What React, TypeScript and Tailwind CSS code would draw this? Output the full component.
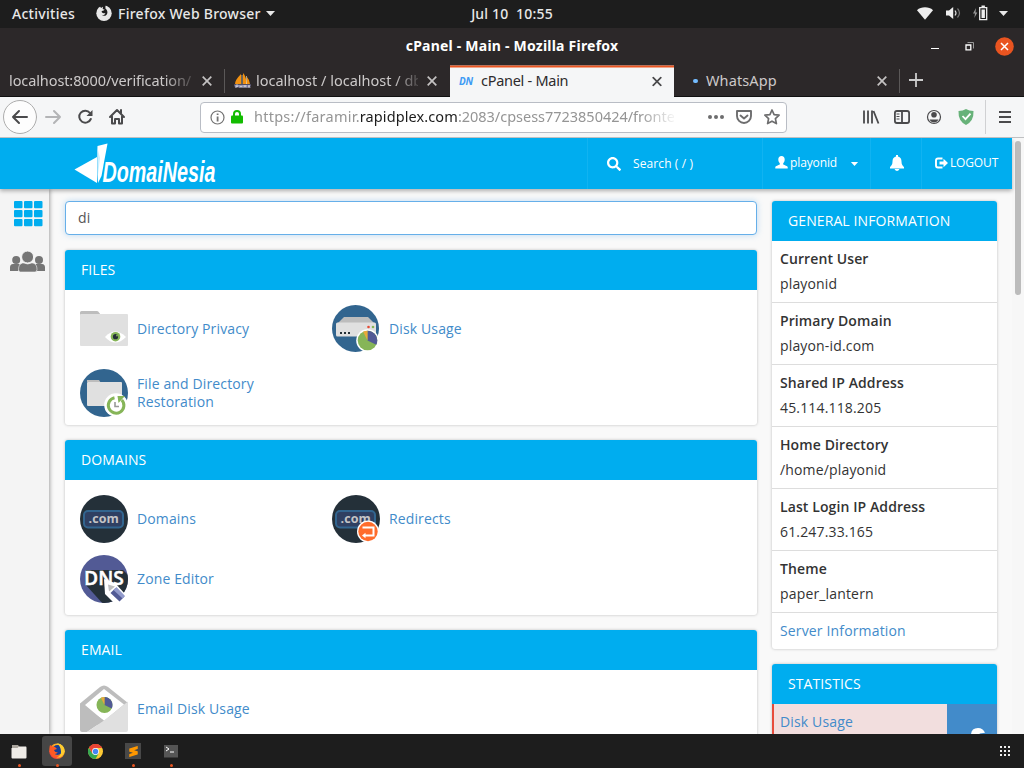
import React from 'react';
import { FaSearch } from 'react-icons/fa';
import { SiSublimetext } from 'react-icons/si';

const ubuntu = "font-['Noto_Sans',sans-serif]";

function Caret({ className = '' }: { className?: string }) {
  return (
    <svg className={className} width="9" height="5" viewBox="0 0 9 5" fill="currentColor">
      <path d="M0 0h9L4.500 5z" />
    </svg>
  );
}

function SystemBar() {
  return (
    <div className="flex h-7 shrink-0 items-center bg-[#1d1d1d] text-[14px] font-medium text-[#e8e8e8]">
      <div className="flex w-[406px] items-center pl-3 pb-0.5">
        <span className="w-[84px] whitespace-nowrap tracking-[0.28px]">Activities</span>
        <svg width="16" height="16" viewBox="0 0 16 16">
          <circle cx="8" cy="8.200" r="7.700" fill="#e8e8e8" />
          <path d="M3.200 0L5 3l2-1.200L6.700 4l2 .7-1.600 1.100C5.800 5.600 5.200 6.500 6 7.600c.9 1 2.500.8 3.300.3-.2 1.700-1.700 2.600-3.600 1.900 2 2 5.500 1 5.700-2.100.1-2-.8-3.200-2-4.100L9.500 0H4z" fill="#1d1d1d" />
        </svg>
        <span className="ml-1.5 w-[143px] whitespace-nowrap tracking-[0.26px]">Firefox Web Browser</span>
        <Caret className="ml-[5px]" />
      </div>
      <div className="w-[212px] pb-0.5 text-center tracking-[0.18px]"><span className="whitespace-pre">Jul 10  10:55</span></div>
      <div className="ml-auto flex items-center pb-0.5 pr-[14px]">
        <svg width="16" height="13" viewBox="0 0 16 13"><path d="M0 3.200C4-.6 12-.6 16 3.200L8 12.800z" fill="#eee" /></svg>
        <svg className="ml-[13px]" width="15" height="14" viewBox="0 0 15 14" fill="none" stroke="#aaa" strokeWidth="1.200">
          <path d="M0 4.500h3L7.200 1v12L3 9.500H0z" fill="#eee" stroke="none" />
          <path d="M9 4.500q2 2.500 0 5" stroke="#ddd" /><path d="M11.500 2.500q4 4.500 0 9" stroke="#777" />
        </svg>
        <svg className="ml-[12px]" width="15" height="16" viewBox="0 0 15 16">
          <path d="M3 3L0 8.500h2L1.300 13 4.300 7.500H2.500z" fill="#999" />
          <path d="M6.700 2.700h7v12h-7z" fill="none" stroke="#eee" strokeWidth="1.300" /><path d="M8.500 4.500h3.400v8.400H8.500zM8.500.5h3.400V3H8.500z" fill="#eee" />
        </svg>
        <Caret className="ml-[11px] mr-[2px]" />
      </div>
    </div>
  );
}

function TitleBar() {
  return (
    <div className="grid h-[37px] shrink-0 grid-cols-[1fr_214px_1fr] items-center bg-[#2c2829]">
      <span />
      <span className="-mt-0.5 whitespace-nowrap text-center text-[14px] font-bold tracking-[0.22px] text-white">cPanel - Main - Mozilla Firefox</span>
      <div className="flex items-center justify-end pr-[10px]">
        <span className="mt-1 h-px w-2 bg-white" />
        <svg className="ml-[26px]" width="9" height="9" viewBox="0 0 9 9" fill="none"><path d="M1 3h4.800v4.800H1z" stroke="#fff" strokeWidth="1.300" /><path d="M2.500.500h6v6" stroke="#999" /></svg>
        <svg className="ml-[21px]" width="19" height="19" viewBox="0 0 19 19"><circle cx="9.500" cy="9.500" r="9.300" fill="#e95420" /><path d="M6 6l7 7m0-7l-7 7" stroke="#fff" strokeWidth="1.500" /></svg>
      </div>
    </div>
  );
}

function CloseMark({ active = false }: { active?: boolean }) {
  return (
    <svg className="shrink-0" width="10" height="10" viewBox="0 0 10 10">
      <path d="M.7.7l8.600 8.600m0-8.600L.7 9.300" stroke={active ? '#4a4a4c' : '#c4c2c2'} strokeWidth="1.700" />
    </svg>
  );
}

function TabStrip() {
  return (
    <div className="flex h-8 shrink-0 items-center border-b border-[#111] bg-[#2c2829] text-[14.500px] text-[#ccc9c9]">
      <div className="flex w-[224px] items-center pl-[9px]">
        <span className="mr-2 w-[185px] overflow-hidden whitespace-nowrap tracking-[-0.1px] [mask-image:linear-gradient(to_right,black_155px,transparent_190px)]">localhost:8000/verification/</span>
        <CloseMark />
      </div>
      <div className="h-6 w-px bg-[#5b5858]" />
      <div className="flex w-[225px] items-center pl-[9px]">
        <svg className="shrink-0" width="17" height="16" viewBox="0 0 17 16">
          <path d="M7 1Q1 7 1 11h6zM9 0v11h4Q12 3 9 0zM13 4v7h3Q15 6 13 4z" fill="#f29111" />
          <path d="M8 2v9M12.500 3v8" stroke="#fff2cc" strokeWidth=".6" />
          <path d="M0 11.500h17l-1 3H1z" fill="#7775a0" /><path d="M2 15v-3h2v1.500H2m4 1.500v-3m0 1.500h2m0-1.500v3m2 0v-3l1 2 1-2v3m2 0l1-3 1 3" stroke="#ddd" strokeWidth=".7" fill="none" />
        </svg>
        <span className="ml-[5px] mr-[9px] w-[162px] overflow-hidden whitespace-nowrap [mask-image:linear-gradient(to_right,black_138px,transparent_168px)]">localhost / localhost / db</span>
        <CloseMark />
      </div>
      <div className="flex h-[32px] w-[224px] translate-y-[0.5px] items-center border-t-2 border-[#e95420] bg-[#f5f6f7] pl-[9px] text-[#2d2b2c]">
        <span className="-mt-0.5 w-[15px] shrink-0 text-[10px] font-bold italic tracking-[-0.2px] text-[#3e9bf4]">DN</span>
        <span className="-mt-1 ml-[7px] w-[161px] whitespace-nowrap tracking-[-0.28px]">cPanel - Main</span>
        <span className="-mt-0.5 ml-[10px]"><CloseMark active /></span>
      </div>
      <div className="flex w-[225px] items-center pl-[19px]">
        <span className="h-1 w-[5px] rounded-full bg-[#74bcff]" />
        <span className="ml-2 w-[162px] tracking-[0.1px]">WhatsApp</span>
        <span className="ml-[9px]"><CloseMark /></span>
      </div>
      <div className="h-6 w-px bg-[#5b5858]" />
      <svg className="-mt-0.5 ml-[9px]" width="14" height="14" viewBox="0 0 14 14"><path d="M7 0v14M0 7h14" stroke="#ccc" strokeWidth="1.800" /></svg>
    </div>
  );
}

function Toolbar() {
  return (
    <div className="flex h-[41px] shrink-0 items-center border-b border-[#bfc0c2] bg-[#f5f6f7]">
      <svg width="200" height="40" viewBox="0 0 200 40" fill="none" stroke="#4a4a4c" strokeWidth="2" strokeLinejoin="round" strokeLinecap="round">
        <circle cx="20" cy="20" r="16.500" fill="#fdfdfd" stroke="#adadad" strokeWidth="1" />
        <path d="M27 20H13m6-6l-6 6 6 6" />
        <path d="M46 20h14m-6-6l6 6-6 6" stroke="#b3b4b6" />
        <path d="M90 16a6 6 0 1 0 .8 6" /><path d="M92.500 13v6h-6z" fill="#4a4a4c" stroke="none" />
        <path d="M110 20l7-7 7 7M112 19.500v7h3v-4.500h4v4.500h3v-7" /><path d="M121 13v3" />
      </svg>
      <div className="flex h-[31px] w-[587px] items-center rounded-[4px] border border-[#b9bdc5] bg-white pl-[9px] pr-[6px]">
        <svg className="shrink-0" width="15" height="15" viewBox="0 0 15 15"><circle cx="7.500" cy="7.500" r="6.500" fill="none" stroke="#737373" strokeWidth="1.200" /><path d="M6.700 6.500h1.800v5H6.700zM6.700 3.400h1.800v1.700H6.700z" fill="#737373" /></svg>
        <svg className="ml-1.5 shrink-0" width="12" height="14" viewBox="0 0 12 14"><path d="M3 6V4a3 3 0 0 1 6 0v2" fill="none" stroke="#12bc00" strokeWidth="2" /><rect y="5.500" width="12" height="8" rx="1" fill="#12bc00" /></svg>
        <span className="ml-[11px] w-[420px] overflow-hidden whitespace-nowrap text-[14.500px] text-[#959595] [mask-image:linear-gradient(to_right,black_385px,transparent_424px)]"><span className="tracking-[0.25px]">https://faramir.</span><span className="tracking-[0.1px] text-[#1c1c1c]">rapidplex.com</span><span className="tracking-[-0.02px]">:2083/cpsess7723850424/fronte</span></span>
        <svg className="ml-auto shrink-0" width="75" height="18" viewBox="0 0 75 18" fill="none" stroke="#6d6d6e" strokeWidth="1.900" strokeLinejoin="round" strokeLinecap="round">
          <g fill="#6d6d6e" stroke="none"><circle cx="5" cy="9" r="2" /><circle cx="11" cy="9" r="2" /><circle cx="17" cy="9" r="2" /></g>
          <path d="M32 3h14v5a7 7 0 0 1-14 0zM35.500 7.500L39 10.500l3.500-3" />
          <path d="M67 2l2.100 4.600 5 .6-3.700 3.400 1 5L67 13.200l-4.400 2.400 1-5-3.700-3.400 5-.6z" strokeWidth="1.700" />
        </svg>
      </div>
      <svg className="ml-auto" width="164" height="40" viewBox="0 0 164 40" fill="none" stroke="#4a4a4c" strokeWidth="1.800">
        <path d="M4 13.500v13M8 13.500v13M12 13.500v13M13.500 14l5 12.500" />
        <rect x="34.900" y="14" width="14.200" height="12" rx="2" /><path d="M42 14v12" /><path d="M36.500 17h3m-3 2.500h3m-3 2.500h3" strokeWidth="1" />
        <circle cx="74" cy="20" r="6.500" strokeWidth="1.200" /><circle cx="74" cy="17.800" r="2.800" fill="#4a4a4c" stroke="none" /><path d="M69.500 22.500h9q-1.500 3-4.500 3t-4.500-3z" fill="#4a4a4c" stroke="none" />
        <path d="M98.500 14q4.500-.2 7.500-2 3 1.800 7.500 2 .5 10-7.500 14-8-4-7.500-14z" fill="#67b279" stroke="none" /><path d="M102.500 19l3 3.200 5-5.500" stroke="#fff" />
        <path d="M125.500 3v34" stroke="#d0d1d3" strokeWidth="1" />
        <path d="M139 15h12m-12 5h12m-12 5h12" strokeWidth="2" />
      </svg>
    </div>
  );
}

function SiteHeader() {
  return (
    <header className="relative z-10 flex h-[51px] shrink-0 bg-[#00adef] text-white shadow-[0_2px_4px_rgba(0,0,0,0.3)]">
      <div className="w-[587px] pl-[73px]">
        <svg width="150" height="51" viewBox="0 0 150 51">
          <path d="M1.500 31.500L24 19v26z" fill="#fff" /><path d="M24.500 8L34.500 5.500 28.500 38 25 45z" fill="#fff" /><path d="M24 8v37l3-25z" fill="#b8e9ff" opacity=".7" />
          <text x="29.500" y="44" fontFamily="Liberation Sans" fontSize="29" fontWeight="700" fontStyle="italic" fill="#fff" textLength="113" lengthAdjust="spacingAndGlyphs">DomaiNesia</text>
        </svg>
      </div>
      <div className="flex w-[175px] items-center border-l border-[#11b3f1] pl-[19px] text-[12px]">
        <FaSearch size={14} /><span className="ml-3 tracking-[0.1px]">Search ( / )</span>
      </div>
      <div className="flex w-[108px] items-center border-l border-[#11b3f1] pb-0.5 pl-[12px] text-[12px]">
        <svg width="13" height="13" viewBox="0 0 13 13" fill="currentColor"><path d="M6.500 0c2 0 3.200 1.500 3.200 3.500 0 1.700-.7 2.800-1.500 3.800v1.200c1.500.8 4.300 1.500 4.500 2.500V12.500H.3V11c.2-1 3-1.700 4.500-2.500V7.300c-.8-1-1.500-2.100-1.500-3.800C3.300 1.500 4.500 0 6.500 0z" /></svg>
        <span className="ml-[2px] w-[60px] tracking-[-0.12px]">playonid</span><Caret className="mt-[3px] h-1" />
      </div>
      <div className="flex w-[51px] items-center justify-center border-l border-[#11b3f1] pb-0.5 pl-0.5">
        <svg width="14" height="16" viewBox="0 0 14 16" fill="currentColor"><path d="M6 0h2v1.500c2.500.7 3.500 2.500 3.500 5 0 3 1 4 2.500 5.500V13.500H0V12c1.500-1.500 2.500-2.500 2.500-5.500 0-2.500 1-4.300 3.500-5zM4.500 14h5q-1 2-2.500 2t-2.500-2z" /></svg>
      </div>
      <div className="flex grow items-center border-l border-[#11b3f1] pb-0.5 pl-[13px] text-[12px]">
        <svg width="13" height="12" viewBox="0 0 13 12"><path d="M7.500 1.500H3Q1 1.500 1 3.500v5q0 2 2 2h4.500" fill="none" stroke="#fff" strokeWidth="1.900" /><path d="M4.500 4.500H8.500V1.800L13 6 8.500 10.200V7.500h-4z" fill="#fff" /></svg>
        <span className="ml-[2px] tracking-[-0.15px]">LOGOUT</span>
      </div>
    </header>
  );
}

function PieBadge({ x, y, r }: { x: number; y: number; r: number }) {
  return (
    <g transform={`translate(${x} ${y}) scale(${r / 10})`}>
      <circle r="10" fill="#86b558" /><path d="M0 0V-10A10 10 0 0 1 9 4.300z" fill="#525a95" /><path d="M0 0V-10A10 10 0 0 0-4.500-9z" fill="#e9a83a" />
    </g>
  );
}

function FolderPrivacyIcon() {
  return (
    <svg className="size-12 shrink-0" viewBox="0 0 48 48">
      <path d="M0 10V7.500Q0 6 1.500 6H17q1.500 0 2 1.500L21 10z" fill="#bdbdbd" /><rect y="9" width="48" height="32" rx="1" fill="#e0e0e0" />
      <path d="M25 32q10-11 21 0-11 11-21 0z" fill="#fff" /><circle cx="35.500" cy="31.700" r="4.800" fill="#86b558" /><circle cx="35.500" cy="31.700" r="2.600" fill="#232e36" /><circle cx="37" cy="30.500" r=".9" fill="#86b558" />
    </svg>
  );
}

function DiskUsageIcon() {
  return (
    <svg className="size-12 shrink-0" viewBox="0 0 48 48">
      <circle cx="23.500" cy="23.500" r="23.500" fill="#32658f" /><path d="M4 20L12 12h24l8 8z" fill="#bdbdbd" /><rect x="4" y="17.500" width="40" height="14" rx="1.500" fill="#e0e0e0" />
      <path d="M8 27h2v2H8zm4 0h2v2h-2zm4 0h2v2h-2z" fill="#232e36" /><circle cx="36.500" cy="22" r="1.300" fill="#e54b36" /><circle cx="41" cy="22" r="1.300" fill="#86b558" />
      <circle cx="35.500" cy="35.500" r="11.300" fill="#fff" /><PieBadge x={35.500} y={35.500} r={9.800} />
    </svg>
  );
}

function RestorationIcon() {
  return (
    <svg className="size-12 shrink-0" viewBox="0 0 48 48">
      <circle cx="24" cy="24" r="24" fill="#32658f" /><path d="M7 13v-2h12l2 3z" fill="#bdbdbd" /><rect x="7" y="13" width="35" height="24" rx="1" fill="#e0e0e0" />
      <circle cx="36" cy="36" r="11.800" fill="#fff" /><path d="M34.500 28.700A7.800 7.800 0 1 0 41.800 31" fill="none" stroke="#86b558" strokeWidth="3" /><path d="M37.500 27h7.500L38.500 34z" fill="#86b558" /><path d="M35 33v4.500h4" fill="none" stroke="#999" strokeWidth="1.600" />
    </svg>
  );
}

function DomainIcon({ redirect = false }: { redirect?: boolean }) {
  return (
    <svg className="size-12 shrink-0" viewBox="0 0 48 48">
      <circle cx="24" cy="24" r="24" fill="#243039" /><rect x="4" y="16" width="39" height="16.500" rx="4" fill="#2f4062" stroke="#32658f" strokeWidth="2" />
      <text x="8.500" y="28" fontFamily="Open Sans" fontSize="12.500" fontWeight="700" fill="#c4c4c6" textLength="30.500" lengthAdjust="spacingAndGlyphs">.com</text>
      {redirect && <g><circle cx="36" cy="36.500" r="11" fill="#fff" /><circle cx="36" cy="36.500" r="9.700" fill="#ff6c2c" /><path d="M30.500 32.500h11v8H32" fill="none" stroke="#fff" strokeWidth="2" /><path d="M30 40.500l3.500-2.800v5.600z" fill="#fff" /></g>}
    </svg>
  );
}

function ZoneEditorIcon() {
  return (
    <svg className="size-12 shrink-0" viewBox="0 0 48 48">
      <clipPath id="zoneDisc"><circle cx="24" cy="24" r="24" /></clipPath>
      <g clipPath="url(#zoneDisc)"><path d="M0 0h48v48H0z" fill="#525a95" /><path d="M6 15h37l5 5v30H24L5 29z" fill="#243039" /></g>
      <text x="4" y="29.500" fontFamily="Open Sans" fontSize="19.500" fontWeight="600" fill="#fff" stroke="#fff" strokeWidth=".5" textLength="40" lengthAdjust="spacingAndGlyphs">DNS</text>
      <path d="M24 24l11 4 11 12-8 8h-4l-9-9z" fill="#fff" /><path d="M28 29.500l7 2-6 5z" fill="#bdbdbd" /><path d="M30.500 38l5-5 9 8.500-5 5z" fill="#525a95" /><path d="M33.500 35l3-3 8.500 9-2.500 2.500z" fill="#929acb" />
    </svg>
  );
}

function EmailIcon() {
  return (
    <svg className="size-12 shrink-0" viewBox="0 0 48 48">
      <path d="M0 18.500L20 2q4-3 8 0l20 16v6L24 38 0 45z" fill="#bdbdbd" /><path d="M5 20L24 4l20 15.500L24 36z" fill="#fff" /><path d="M0 18.500l24 17L7 47H2q-2 0-2-2z" fill="#bdbdbd" /><path d="M24 35.500l24-19V45q0 2-2 2H7z" fill="#e0e0e0" /><PieBadge x={24.500} y={20} r={8} />
    </svg>
  );
}

function Item({ icon, label, className = '' }: { icon: React.ReactNode; label: string; className?: string }) {
  return (
    <a className={`flex items-center text-[14px] leading-[18px] tracking-[0.13px] text-[#428bca] ${className}`}>
      {icon}<span className="ml-[9px] max-w-[150px]">{label}</span>
    </a>
  );
}

function Panel({ title, className, children }: { title: string; className: string; children: React.ReactNode }) {
  return (
    <section className={`overflow-hidden rounded-[3px] bg-white shadow-[0_0_3px_rgba(0,0,0,0.25)] ${className}`}>
      <h2 className="flex h-10 items-center bg-[#00adef] px-4 pb-0.5 text-[14px] tracking-[0.1px] text-white">{title}</h2>
      {children}
    </section>
  );
}

const info: [string, string][] = [
  ['Current User', 'playonid'],
  ['Primary Domain', 'playon-id.com'],
  ['Shared IP Address', '45.114.118.205'],
  ['Home Directory', '/home/playonid'],
  ['Last Login IP Address', '61.247.33.165'],
  ['Theme', 'paper_lantern'],
];

function SideNav() {
  return (
    <nav className="w-[49px] shrink-0 bg-[#f4f4f4] shadow-[1px_0_4px_rgba(0,0,0,0.35)]">
      <svg className="ml-[14px] mt-3" width="29" height="26" viewBox="0 0 29 26" fill="#00adef">
        {[0, 9, 18].map((y) => [0, 10, 20].map((x) => <rect key={`${x}-${y}`} x={x} y={y} width="8.500" height="7.300" rx="1" />))}
      </svg>
      <svg className="ml-[10px] mt-[24px]" width="36" height="22" viewBox="0 0 36 22" fill="#757575">
        <circle cx="6.200" cy="9" r="4" /><circle cx="29" cy="9" r="4" /><path d="M0 20v-3.500Q0 13 3 13h6l2 1.500L8 20zM35 20v-3.500Q35 13 32 13h-6l-2 1.500 3 5.500z" />
        <circle cx="17.600" cy="6" r="6" stroke="#f4f4f4" strokeWidth="1" /><path d="M8.500 18.500q0-5.500 4-6.500h1.500q3.500 2 7.500 0H23q4 1 4 6.500 0 2.500-2 2.500H10.500q-2 0-2-2.500z" stroke="#f4f4f4" strokeWidth=".6" />
      </svg>
    </nav>
  );
}

function Page() {
  return (
    <div className="flex min-h-0 grow overflow-hidden bg-[#f9f9f9] font-['Open_Sans',sans-serif] text-[#333]">
      <div className="flex w-[1012px] flex-col">
        <SiteHeader />
        <div className="flex min-h-0 grow">
          <SideNav />
          <main className="flex w-[708px] shrink-0 flex-col gap-[15px] pl-4 pt-3">
            <div className="flex h-[34px] shrink-0 items-center rounded-[4px] border border-[#66afe9] bg-white px-3 pb-0.5 text-[14px] tracking-[0.3px] text-[#555] shadow-[0_0_6px_rgba(102,175,233,0.4)]">di</div>
            <Panel title="FILES" className="h-[175px] shrink-0">
              <div className="grid grid-cols-[252px_252px] grid-rows-[48px_48px] gap-y-4 px-[15px] pt-[15px]">
                <Item icon={<FolderPrivacyIcon />} label="Directory Privacy" />
                <Item icon={<DiskUsageIcon />} label="Disk Usage" />
                <Item icon={<RestorationIcon />} label="File and Directory Restoration" />
              </div>
            </Panel>
            <Panel title="DOMAINS" className="h-[175px] shrink-0">
              <div className="grid grid-cols-[252px_252px] grid-rows-[48px_48px] gap-y-3 px-[15px] pt-[15px]">
                <Item icon={<DomainIcon />} label="Domains" />
                <Item icon={<DomainIcon redirect />} label="Redirects" />
                <Item icon={<ZoneEditorIcon />} label="Zone Editor" />
              </div>
            </Panel>
            <Panel title="EMAIL" className="h-[175px] shrink-0">
              <div className="px-[15px] pt-[15px]"><Item icon={<EmailIcon />} label="Email Disk Usage" /></div>
            </Panel>
          </main>
          <aside className="ml-[15px] flex w-[225px] flex-col gap-[15px] pt-3">
            <Panel title="GENERAL INFORMATION" className="h-[448px] shrink-0">
              {info.map(([label, value]) => (
                <div key={label} className="h-[62px] border-b border-[#ddd] px-2 pt-[5px] text-[14px] leading-[25px] tracking-[0.1px]">
                  <div className="font-semibold">{label}</div><div className="tracking-[0.16px]">{value}</div>
                </div>
              ))}
              <a className="flex h-9 items-center px-2 pb-0.5 text-[14px] tracking-[0.15px] text-[#428bca]">Server Information</a>
            </Panel>
            <Panel title="STATISTICS" className="h-[175px] shrink-0">
              <div className="flex h-[62px]">
                <div className="w-[175px] border-l-2 border-[#e74c3c] bg-[#f2dede] pl-1.5 pt-[5px] text-[14px] leading-[25px] tracking-[0.15px] text-[#428bca]">Disk Usage</div>
                <div className="flex grow bg-[#428bca] pl-6 pt-6">
                  <svg width="14" height="14" viewBox="0 0 14 14"><path d="M0 7Q0 0 7 0q5 0 7 4.800L8.500 5.500 12 11 6 14z" fill="#fff" /></svg>
                </div>
              </div>
            </Panel>
          </aside>
        </div>
      </div>
      <div className="flex w-3 justify-center bg-[#f7f7f7] pt-[3px]"><div className="h-[154px] w-[6px] rounded-full bg-[#bcbcbc]" /></div>
    </div>
  );
}

function RunningDot() {
  return <span className="absolute bottom-[1.5px] size-[3px] rounded-full bg-[#e95420]" />;
}

function Dock() {
  const slot = 'relative flex h-[34px] w-[38px] shrink-0 items-center justify-center';
  return (
    <div className="flex h-[34px] shrink-0 items-center bg-[#1d1d1d]">
      <div className={slot}>
        <svg width="16" height="15" viewBox="0 0 16 15"><path d="M1 1h6l1.500 2H15v10H1z" fill="#aaa59d" /><path d="M.5 4h6L8 2.500h7Q15.500 2.500 15.500 4v9.500q0 1-1 1h-13q-1 0-1-1z" fill="#efece7" /></svg><RunningDot />
      </div>
      <div className={slot}>
        <div className="flex h-[30px] w-[30px] shrink-0 items-center justify-center rounded-[3px] bg-[#464646]">
          <svg width="16" height="16" viewBox="0 0 16 16">
            <defs><linearGradient id="flame" x1="1" y1="0" x2="0" y2="1"><stop stopColor="#fff04a" /><stop offset=".45" stopColor="#ff9a1f" /><stop offset="1" stopColor="#e8174f" /></linearGradient></defs>
            <circle cx="8" cy="8.200" r="7.800" fill="url(#flame)" /><circle cx="8.500" cy="7" r="5" fill="#173f96" /><path d="M8 0q8 2 7.500 9-2 6-8 5.500 5-2 4.500-6Q12 4 8 0z" fill="#ffcc2f" /><path d="M1 2q2 2 5 2l2 2-3 1q1 3 4 2-2 3-5 1.500Q7 14 11 12q-3 3-7 2Q-1 9 1 2z" fill="#ff5a24" />
          </svg>
        </div><RunningDot />
      </div>
      <div className={slot}>
        <svg width="15" height="15" viewBox="0 0 48 48"><circle cx="24" cy="24" r="24" fill="#fcc934" /><path d="M24 24L3.200 12A24 24 0 0 1 44.800 12z" fill="#e94435" /><path d="M3.200 12A24 24 0 0 0 24 48L34 30H14z" fill="#36a852" /><path d="M24 13h21.500L34 30H24z" fill="#fcc934" /><path d="M3.200 12A24 24 0 0 1 44.800 13H24L14 30z" fill="#e94435" /><circle cx="24" cy="24" r="11" fill="#fff" /><circle cx="24" cy="24" r="8.700" fill="#4385f4" /></svg>
      </div>
      <div className={slot}><div className="flex size-4 items-center justify-center bg-[#484848] text-[#ff9800]"><SiSublimetext size={11} /></div><RunningDot /></div>
      <div className={slot}>
        <svg width="14" height="13" viewBox="0 0 14 13"><path d="M0 0h14v12.500H0z" fill="#555" /><path d="M2 2l3 2-3 2M6 7h4" stroke="#fff" fill="none" /></svg><RunningDot />
      </div>
      <svg className="ml-auto mr-[14px]" width="10" height="10" viewBox="0 0 10 10" fill="#eee"><path d="M0 0h2v2H0zM4 0h2v2H4zM8 0h2v2H8zM0 4h2v2H0zM4 4h2v2H4zM8 4h2v2H8zM0 8h2v2H0zM4 8h2v2H4zM8 8h2v2H8z" /></svg>
    </div>
  );
}

export default function App() {
  return (
    <div className={`flex h-[768px] w-[1024px] flex-col overflow-hidden ${ubuntu}`}>
      <SystemBar />
      <TitleBar />
      <TabStrip />
      <Toolbar />
      <Page />
      <Dock />
    </div>
  );
}
